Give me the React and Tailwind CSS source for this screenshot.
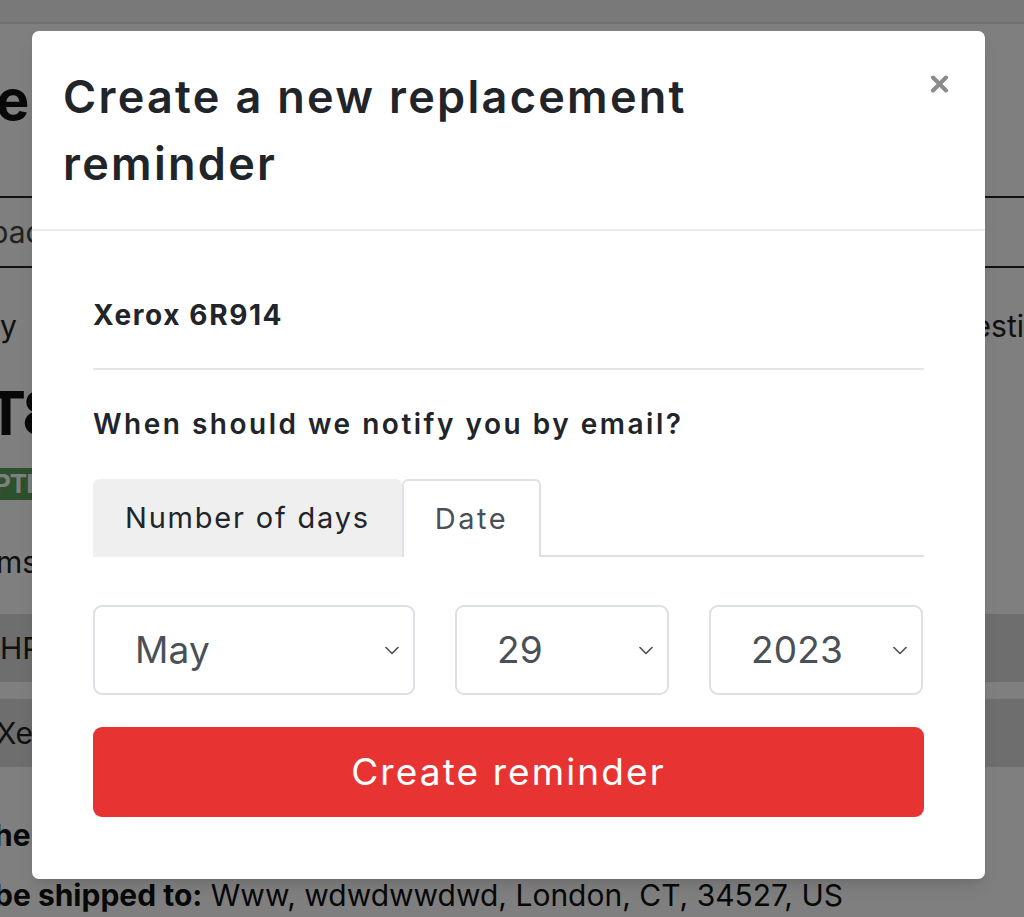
import { useState } from 'react'

const font = { fontFamily: '"Inter", "Noto Sans", sans-serif' }

function Chevron() {
  return (
    <svg width="14" height="9" viewBox="0 0 14 9" fill="none" className="shrink-0">
      <path d="M1 1.5l6 6 6-6" stroke="#495057" strokeWidth="1.6" strokeLinecap="round" strokeLinejoin="round" />
    </svg>
  )
}

function FakeSelect({ value, className }) {
  return (
    <div className={`h-[90px] flex items-center justify-between pl-[40px] pr-[14px] border-2 border-[#dcdfe3] rounded-[9px] bg-white ${className}`}>
      <span className="text-[37px] text-[#495057] tracking-[0.2px]">{value}</span>
      <Chevron />
    </div>
  )
}

function BackgroundPage() {
  return (
    <div className="min-h-[917px] bg-white overflow-hidden">
      {/* top bar */}
      <div className="h-[24px] bg-[#f2f2f2] border-b-2 border-[#e0e0e0]" />
      <div className="pt-[36px]">
        <div className="text-[56px] font-bold leading-[80px] -ml-[4px] text-[#111]">e</div>
        <div className="mt-[56px] border-y-2 border-[#222] h-[72px] flex items-center">
          <span className="text-[30px] text-[#444] -ml-[10px]">pac</span>
        </div>
        <div className="mt-[36px] flex justify-between text-[30px] text-[#222] leading-[44px]">
          <span>y</span>
          <span>esti</span>
        </div>
        <div className="mt-[30px] text-[60px] font-bold leading-[70px] -ml-[14px] tracking-[-4px] text-[#111]">T8</div>
        <div className="mt-[20px] w-[40px] h-[32px] bg-[#5aa05a] text-white font-bold text-[26px] leading-[32px] -ml-[6px] tracking-[-1px]">PTI</div>
        <div className="mt-[40px] text-[30px] text-[#222] leading-[44px] -ml-[4px]">ms</div>
        <div className="mt-[30px] h-[68px] bg-[#dcdcdc] flex items-center text-[30px] text-[#222]">HP</div>
        <div className="mt-[17px] h-[68px] bg-[#dcdcdc] flex items-center text-[30px] text-[#222] -ml-[4px]">Xer</div>
        <div className="mt-[46px] text-[30px] font-bold text-[#111] leading-[44px] -ml-[6px]">he</div>
        <div className="mt-[16px] text-[30px] text-[#111] leading-[44px] -ml-[6px] whitespace-nowrap">
          <span className="font-bold">be shipped to:</span> Www, wdwdwwdwd, London, CT, 34527, US
        </div>
      </div>
    </div>
  )
}

export default function App() {
  const [tab, setTab] = useState('date')

  return (
    <div className="relative w-[1024px] h-[917px] overflow-hidden" style={font}>
      <BackgroundPage />

      {/* overlay */}
      <div className="absolute inset-0 bg-black/50" />

      {/* modal */}
      <div className="absolute left-[32px] top-[31px] w-[953px] bg-white rounded-[7px] shadow-lg text-[#212529]">
        <div className="relative px-[31px] py-[32px] border-b-2 border-[#e9ecef]">
          <h5 className="text-[45px] font-semibold leading-[67px] tracking-[2.3px]">
            Create a new replacement
            <br />
            reminder
          </h5>
          <button className="absolute right-[36px] top-[44px] p-0" title="Close">
            <svg width="19" height="18" viewBox="0 0 19 18">
              <path d="M3 2.5l13 13M16 2.5l-13 13" stroke="#8a8a8a" strokeWidth="4" strokeLinecap="round" />
            </svg>
          </button>
        </div>

        <div className="px-[61px] pt-[63px] pb-[62px]">
          {/* product */}
          <div className="text-[28px] font-bold leading-[42px] tracking-[1.6px]">Xerox 6R914</div>
          <div className="mt-[32px] h-[2px] bg-[#e6e6e6]" />

          {/* notify */}
          <div className="mt-[33px] text-[28px] font-semibold leading-[42px] tracking-[2.5px]">When should we notify you by email?</div>

          {/* tabs */}
          <div className="mt-[34px] flex border-b-2 border-[#dee2e6]">
            <button
              onClick={() => setTab('days')}
              className={`h-[78px] px-[32px] text-[29px] tracking-[1.8px] rounded-t-[6px] -mb-[2px] ${tab === 'days' ? 'bg-white border-2 border-b-0 border-[#dee2e6] text-[#495057]' : 'bg-[#efefef] text-[#212529]'}`}
            >
              Number of days
            </button>
            <button
              onClick={() => setTab('date')}
              className={`h-[78px] px-[31px] text-[29px] tracking-[2.5px] rounded-t-[6px] -mb-[2px] ${tab === 'date' ? 'bg-white border-2 border-b-0 border-[#dee2e6] text-[#495057]' : 'bg-[#efefef] text-[#212529]'}`}
            >
              Date
            </button>
          </div>

          {/* date selects */}
          <div className="mt-[48px] flex gap-[40px]">
            <FakeSelect value="May" className="w-[322px]" />
            <FakeSelect value="29" className="w-[214px]" />
            <FakeSelect value="2023" className="w-[214px]" />
          </div>

          <button className="mt-[32px] w-full h-[90px] rounded-[9px] bg-[#e83333] text-white text-[37px] tracking-[2.1px]">
            Create reminder
          </button>
        </div>
      </div>
    </div>
  )
}
